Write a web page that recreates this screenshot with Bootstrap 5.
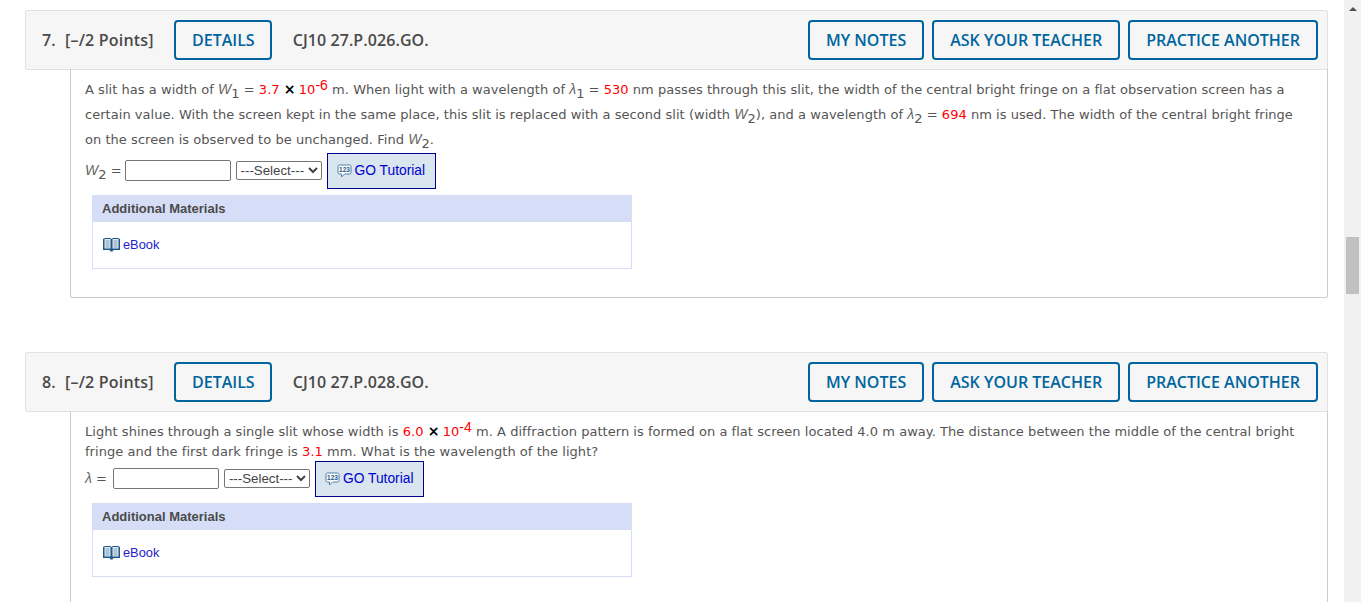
<!DOCTYPE html>
<html lang="en">
<head>
    <meta charset="UTF-8">
    <meta name="viewport" content="width=device-width, initial-scale=1.0">
    <title>Assignment</title>
    <link href="https://cdn.jsdelivr.net/npm/bootstrap@5.3.0/dist/css/bootstrap.min.css" rel="stylesheet">
    <style>
        html, body { height: 602px; overflow: hidden; }
        body { background: #fff; color: #555; font-family: "DejaVu Sans", Verdana, sans-serif; font-size: 13px; }
        .page-wrap { height: 602px; overflow: hidden; }
        .page-main { width: 1344px; padding: 10px 16px 0 25px; }
        .q-block { margin-bottom: 54px; }
        .q-head { height: 60px; background: #f6f6f6; border: 1px solid #e1e1e1; border-radius: 2px; padding: 0 9px 0 16px; font-family: "Open Sans", sans-serif; font-size: 16px; font-weight: 600; color: #4a4a4a; }
        .q-num { width: 23px; }
        .q-pts { width: 109px; letter-spacing: .2px; }
        .q-code { margin-left: 21px; letter-spacing: .08px; }
        .wa-btn { height: 40px; padding: 0 16px; background: transparent; border: 2px solid #00659e; border-radius: 4px; color: #00659e; font-family: "Open Sans", sans-serif; font-size: 16px; font-weight: 600; line-height: 36px; text-decoration: none; }
        .wa-btn.narrow { padding-right: 15px; }
        .q-body { margin-left: 45px; margin-top: -1px; height: 229px; border: 1px solid #ccc; border-top: 0; border-radius: 0 0 3px 3px; padding: 8px 14px 0 14px; }
        .q-body.tight { padding-top: 11px; height: 260px; border-bottom: 0; }
        .q-text { margin: 0; line-height: 25px; letter-spacing: .04px; white-space: nowrap; }
        .tight .q-text { line-height: 20px; }
        .q-val { color: #f00; }
        .q-times { color: #000; font-size: 14px; font-weight: 700; line-height: 0; margin-right: -1px; }
        .q-text sup { font-family: "Liberation Sans", sans-serif; font-size: 14px; top: -.32em; line-height: 0; }
        .q-text sub, .ans-line sub { font-size: 13px; line-height: 0; bottom: -.3em; }
        .q-var { font-family: "Liberation Sans", sans-serif; font-style: italic; font-size: 14px; line-height: 0; color: #666; }
        .ans-line { height: 36px; margin-top: 1px; }
        .tight .ans-line { margin-top: -1px; }
        .ans-label { margin-right: 6px; }
        .ans-label.w-lab { margin-right: 3px; }
        .ans-input { width: 106px; height: 21px; margin-bottom: 2px; border: 1px solid #767676; border-radius: 2px; background: #fff; padding: 0 2px; }
        .ans-select { width: 86px; height: 19px; margin: 0 0 2px 5px; font-family: "Liberation Sans", sans-serif; font-size: 13.3px; color: #444; border: 1px solid #767676; border-radius: 2px; background: #fff; padding: 0; }
        .go-link { height: 36px; width: 109px; margin-left: 5px; background: #d9e5ef; border: 1px solid #00008b; color: #0000cd; font-family: "Liberation Sans", sans-serif; font-size: 13.8px; text-decoration: none; gap: 3px; padding: 0 0 0 9px; }
        .mat-box { width: 540px; height: 74px; margin: 6px 0 0 7px; border: 1px solid #d6def7; }
        .mat-head { height: 27px; margin: -1px -1px 0; background: #d6def7; color: #4a4a4a; font-family: "Liberation Sans", sans-serif; font-size: 13px; font-weight: 700; line-height: 27px; padding-left: 10px; }
        .mat-body { padding: 13px 0 0 10px; gap: 3px; }
        .mat-link { color: #2222cc; font-family: "Liberation Sans", sans-serif; font-size: 12.8px; text-decoration: none; }
        .side-scroll { width: 17px; height: 602px; background: #f1f1f1; position: absolute; top: 0; right: 0; }
        .side-thumb { position: absolute; top: 237px; left: 2px; width: 13px; height: 57px; background: #c1c1c1; }
        .side-arrow { position: absolute; top: 7px; left: 5px; width: 0; height: 0; border: 4px solid transparent; border-top: 0; border-bottom: 4px solid #505050; }
    </style>
</head>
<body>
    <div class="page-wrap">
        <div class="page-main">

            <div class="q-block">
                <div class="q-head d-flex align-items-center">
                    <span class="q-num">7.</span>
                    <span class="q-pts">[&#8211;/2 Points]</span>
                    <a class="wa-btn narrow" href="#">DETAILS</a>
                    <span class="q-code">CJ10 27.P.026.GO.</span>
                    <div class="ms-auto d-flex gap-2">
                        <a class="wa-btn" href="#">MY NOTES</a>
                        <a class="wa-btn" href="#">ASK YOUR TEACHER</a>
                        <a class="wa-btn" href="#">PRACTICE ANOTHER</a>
                    </div>
                </div>
                <div class="q-body">
                    <p class="q-text">A slit has a width of <span class="q-var">W</span><sub>1</sub> = <span class="q-val">3.7</span> <span class="q-times">&#215;</span> <span class="q-val">10<sup>-6</sup></span> m. When light with a wavelength of <span class="q-var">&#955;</span><sub>1</sub> = <span class="q-val">530</span> nm passes through this slit, the width of the central bright fringe on a flat observation screen has a</p>
                    <p class="q-text">certain value. With the screen kept in the same place, this slit is replaced with a second slit (width <span class="q-var">W</span><sub>2</sub>), and a wavelength of <span class="q-var">&#955;</span><sub>2</sub> = <span class="q-val">694</span> nm is used. The width of the central bright fringe</p>
                    <p class="q-text">on the screen is observed to be unchanged. Find <span class="q-var">W</span><sub>2</sub>.</p>
                    <div class="ans-line d-flex align-items-center">
                        <span class="ans-label w-lab"><span class="q-var">W</span><sub>2</sub> =</span>
                        <input class="ans-input" type="text">
                        <select class="ans-select"><option>---Select---</option></select>
                        <a class="go-link d-flex align-items-center" href="#">
                            <svg width="15" height="14" viewBox="0 0 15 14"><path d="M2.500 1h10A1.500 1.500 0 0 1 14 2.500v6A1.500 1.500 0 0 1 12.500 10h-5l-3 3v-3h-2A1.500 1.500 0 0 1 1 8.500v-6A1.500 1.500 0 0 1 2.500 1z" fill="#fff" stroke="#4f7fa8"/><text x="7.500" y="8" text-anchor="middle" font-size="6.500" font-weight="700" fill="#28557f" font-family="Liberation Sans, sans-serif">123</text></svg>
                            GO Tutorial
                        </a>
                    </div>
                    <div class="mat-box">
                        <div class="mat-head">Additional Materials</div>
                        <div class="mat-body d-flex align-items-center">
                            <svg width="17" height="15" viewBox="0 0 17 15"><path d="M0 2l2-1h5l1.500 1L10 1h5l2 1v11h-6.500l-1 1.500h-2L6.500 13H0z" fill="#1c5a8a"/><path d="M1.500 2h6v9.500h-6zM9.500 2h6v9.500h-6z" fill="#dfeaf3"/><path d="M2.500 4h4M2.500 6h4M2.500 8h4M2.500 10h4M10.500 4h4M10.500 6h4M10.500 8h4M10.500 10h4" stroke="#7d9db8"/></svg>
                            <a class="mat-link" href="#">eBook</a>
                        </div>
                    </div>
                </div>
            </div>

            <div class="q-block">
                <div class="q-head d-flex align-items-center">
                    <span class="q-num">8.</span>
                    <span class="q-pts">[&#8211;/2 Points]</span>
                    <a class="wa-btn narrow" href="#">DETAILS</a>
                    <span class="q-code">CJ10 27.P.028.GO.</span>
                    <div class="ms-auto d-flex gap-2">
                        <a class="wa-btn" href="#">MY NOTES</a>
                        <a class="wa-btn" href="#">ASK YOUR TEACHER</a>
                        <a class="wa-btn" href="#">PRACTICE ANOTHER</a>
                    </div>
                </div>
                <div class="q-body tight">
                    <p class="q-text">Light shines through a single slit whose width is <span class="q-val">6.0</span> <span class="q-times">&#215;</span> <span class="q-val">10<sup>-4</sup></span> m. A diffraction pattern is formed on a flat screen located 4.0 m away. The distance between the middle of the central bright</p>
                    <p class="q-text">fringe and the first dark fringe is <span class="q-val">3.1</span> mm. What is the wavelength of the light?</p>
                    <div class="ans-line d-flex align-items-center">
                        <span class="ans-label"><span class="q-var">&#955;</span> =</span>
                        <input class="ans-input" type="text">
                        <select class="ans-select"><option>---Select---</option></select>
                        <a class="go-link d-flex align-items-center" href="#">
                            <svg width="15" height="14" viewBox="0 0 15 14"><path d="M2.500 1h10A1.500 1.500 0 0 1 14 2.500v6A1.500 1.500 0 0 1 12.500 10h-5l-3 3v-3h-2A1.500 1.500 0 0 1 1 8.500v-6A1.500 1.500 0 0 1 2.500 1z" fill="#fff" stroke="#4f7fa8"/><text x="7.500" y="8" text-anchor="middle" font-size="6.500" font-weight="700" fill="#28557f" font-family="Liberation Sans, sans-serif">123</text></svg>
                            GO Tutorial
                        </a>
                    </div>
                    <div class="mat-box">
                        <div class="mat-head">Additional Materials</div>
                        <div class="mat-body d-flex align-items-center">
                            <svg width="17" height="15" viewBox="0 0 17 15"><path d="M0 2l2-1h5l1.500 1L10 1h5l2 1v11h-6.500l-1 1.500h-2L6.500 13H0z" fill="#1c5a8a"/><path d="M1.500 2h6v9.500h-6zM9.500 2h6v9.500h-6z" fill="#dfeaf3"/><path d="M2.500 4h4M2.500 6h4M2.500 8h4M2.500 10h4M10.500 4h4M10.500 6h4M10.500 8h4M10.500 10h4" stroke="#7d9db8"/></svg>
                            <a class="mat-link" href="#">eBook</a>
                        </div>
                    </div>
                </div>
            </div>

        </div>
        <div class="side-scroll">
            <div class="side-arrow"></div>
            <div class="side-thumb"></div>
        </div>
    </div>
    <script src="https://cdn.jsdelivr.net/npm/bootstrap@5.3.0/dist/js/bootstrap.bundle.min.js"></script>
</body>
</html>
